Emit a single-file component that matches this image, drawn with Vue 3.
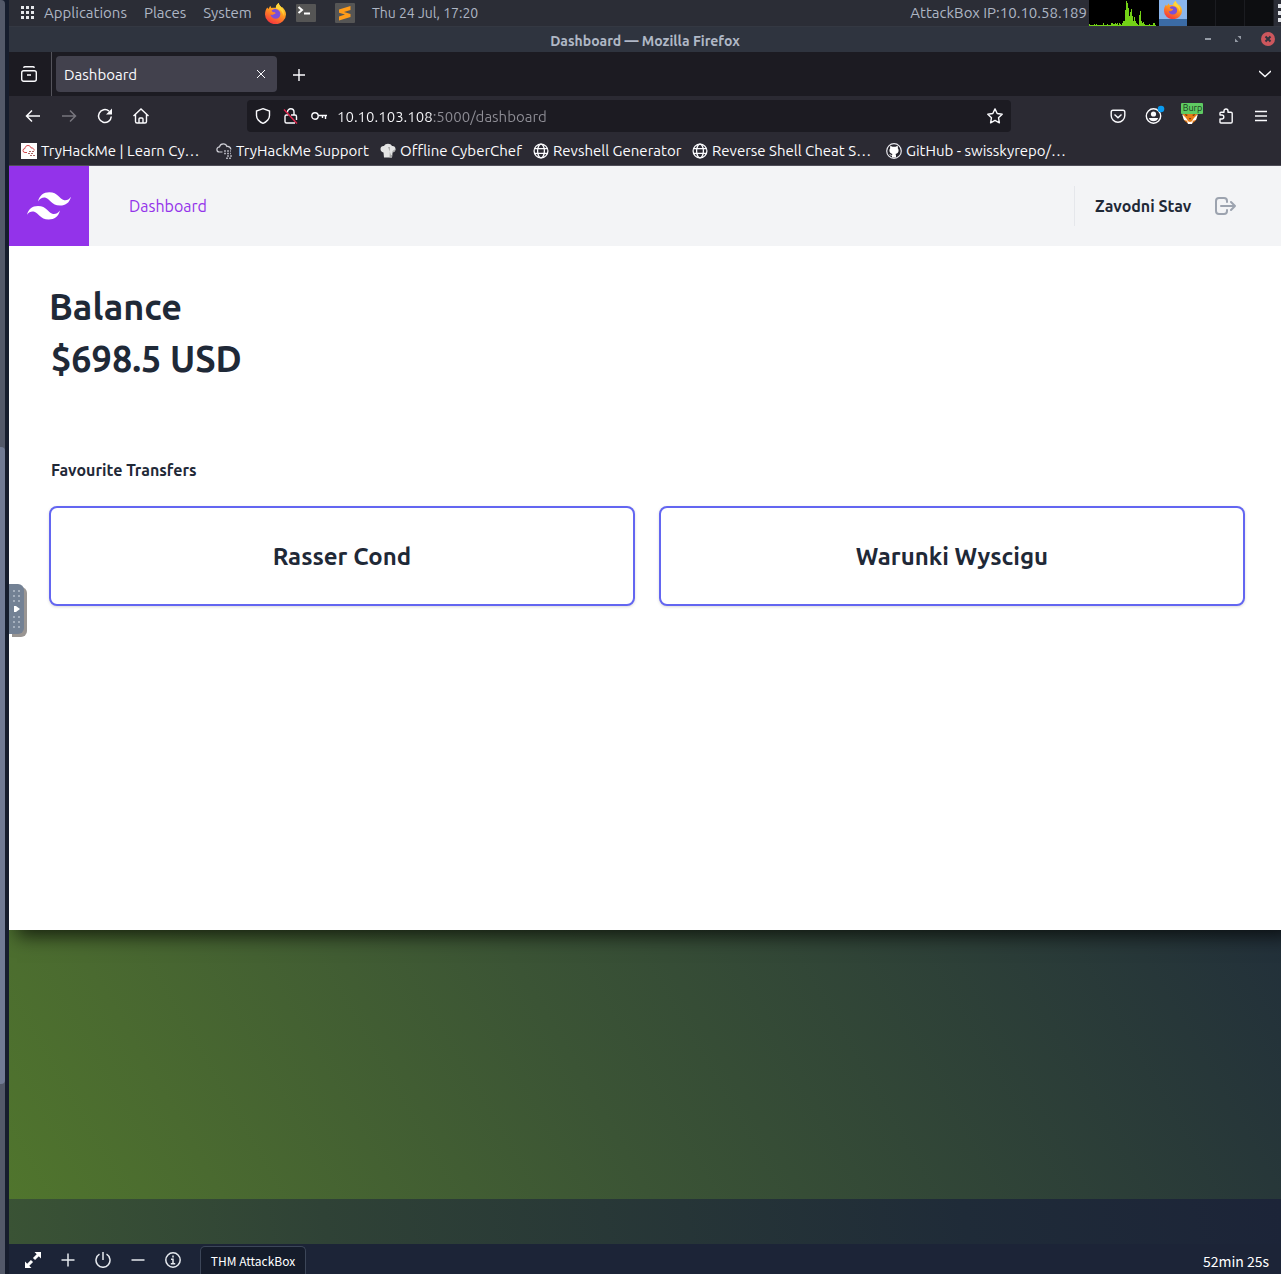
<script setup>
import { ref } from 'vue'

const address = ref('10.10.103.108:5000/dashboard')

const bookmarks = [
  { icon: 'thm', label: 'TryHackMe | Learn Cy…' },
  { icon: 'cloud', label: 'TryHackMe Support' },
  { icon: 'chef', label: 'Offline CyberChef' },
  { icon: 'globe', label: 'Revshell Generator' },
  { icon: 'globe', label: 'Reverse Shell Cheat S…' },
  { icon: 'github', label: 'GitHub - swisskyrepo/…' }
]

const transfers = ['Rasser Cond', 'Warunki Wyscigu']

const load = [
  2, 1, 1, 1, 1, 2, 1, 2, 1, 1, 1, 1, 1, 1, 3, 1, 1, 1, 2, 1, 1, 1, 3, 3, 2, 2, 3, 2, 3, 1, 3, 2, 1, 3,
  5, 5, 16, 25, 23, 18, 10, 14, 17, 10, 5, 9, 5, 3, 2, 1, 11, 15, 5, 3, 4, 2, 1, 1, 1, 1, 2, 1, 1, 1, 3, 3, 1
]
</script>

<template>
  <div class="screen">
    <svg class="sprite" aria-hidden="true">
      <defs>
        <linearGradient id="flame" x1="0.8" y1="0" x2="0.3" y2="1">
          <stop offset="0" stop-color="#ffe23c" />
          <stop offset="0.45" stop-color="#ff9a1f" />
          <stop offset="1" stop-color="#f5313f" />
        </linearGradient>
      </defs>
      <symbol id="firefox" viewBox="0 0 20 20">
        <path fill="url(#flame)" d="M2.2 4.2 3.3 5.6 5 2.5l1.1 2.3c1.5-.5 3-.4 4.2 0C10.200 2.600 11.500 1 13.200 0c0 2 1.600 3 2.700 4.400L16.600 4c2.200 2 3.400 4.300 3.400 7a9.800 9 0 0 1-20 0c0-2.500.6-5 2.200-6.800z" />
        <path fill="#7a4fd8" d="M6.200 7.300c1.500-1.600 4-2 6-.9 1.700 1 2.700 2.600 2.400 4.700-.4 2.500-2.400 4.100-4.900 3.900-2.300-.2-4.200-1.900-4.500-4 1 .5 2.200.5 3.300-.2l1.700-1-.8-1.100c-1 .2-2.300-.1-3.200-1.400z" />
        <path fill="#ffd53b" d="M13.200 0c0 2 1.600 3 2.700 4.400 1.900 2.400 2.500 5 1.500 7.900-.2-2.500-1.200-4.200-2.700-5.300C12.800 5.700 10.300 5 10.300 4.800 10.200 2.600 11.500 1 13.200 0z" />
      </symbol>
      <symbol id="i-thm" viewBox="0 0 16 16">
        <path fill="#fff" d="M0 0h16v16H0z" />
        <path fill="none" stroke="#d4474c" d="M6 9.500H4a2 2 0 0 1 0-4C4 3.500 5.500 2.500 7 2.500c1.600 0 2.700 1 3 2.400 1.700-.3 3.200 1 3.200 2.600" />
        <path stroke="#a66" stroke-dasharray="2 1" d="M8 8.500h5M7 10.500h6M9 12.500h5" />
      </symbol>
      <symbol id="i-cloud" viewBox="0 0 16 16">
        <path fill="none" stroke="#cfcfd6" stroke-width="1.200" d="M6.500 9H3.500a2.600 2.600 0 0 1 0-5.200C4 1.800 5.500.8 7.300.8c2 0 3.200 1.200 3.600 2.700 2-.2 3.700 1 4 3" />
        <path stroke="#a9a9b2" stroke-width="1.400" stroke-dasharray="2 1" d="M8 8h7M8 10.500h7M11 13h5M10 15.300h5" />
      </symbol>
      <symbol id="i-chef" viewBox="0 0 16 16">
        <path fill="#e4e4e4" d="M3.500 9.500C1.500 9 .5 7.700.5 6c0-2 1.600-3.300 3.500-3C4.800 1.600 6.200.8 8 .8s3.200.8 4 2.200c1.900-.3 3.500 1 3.500 3 0 1.700-1 3-3 3.500l-.5 5h-8z" />
        <path fill="#aaa" d="M8 4h2l-.5 10.500H12l.5-5c2-.5 3-1.800 3-3.500l-3 2-.5 4h-1z" />
      </symbol>
      <symbol id="i-globe" viewBox="0 0 16 16">
        <g fill="none" stroke="#fbfbfe" stroke-width="1.300">
          <circle cx="8" cy="8" r="6.900" />
          <ellipse cx="8" cy="8" rx="3.400" ry="6.900" />
          <path d="M1.500 5.700h13M1.500 10.300h13" />
        </g>
      </symbol>
      <symbol id="i-github" viewBox="0 0 16 16">
        <circle cx="8" cy="8" r="7.300" fill="#25242c" stroke="#e8e8ee" stroke-width="1.200" />
        <path fill="#fff" d="M6 14.600v-2c-1.500.3-2.200-.4-2.700-1.500 1 .2 1.300 1 2.700.8.100-.5.200-.8.500-1C4.500 10.500 3.400 9.500 3.400 7.300c0-.9.300-1.600.8-2.100-.2-.7-.2-1.500.1-2.200.9 0 1.600.4 2.200.8a8 8 0 0 1 3 0c.6-.4 1.300-.8 2.200-.8.300.7.300 1.500.1 2.200.5.500.8 1.200.8 2.100 0 2.200-1.100 3.200-3.100 3.600.4.300.5.900.5 1.500v2.200z" />
      </symbol>
    </svg>

    <div class="scroller"><div class="thumb"></div></div>

    <div class="remote">
      <div class="panel">
        <nav class="menus">
          <svg class="grid-icon" width="14" height="14" viewBox="0 0 14 14" fill="#e4e6ea">
            <path d="M0 0h3v3H0zM5 0h3v3H5zM10 0h3v3h-3zM0 5h3v3H0zM5 5h3v3H5zM10 5h3v3h-3zM0 10h3v3H0zM5 10h3v3H5zM10 10h3v3h-3z" />
          </svg>
          <button class="plain">Applications</button>
          <button class="plain">Places</button>
          <button class="plain">System</button>
        </nav>
        <div class="launchers">
          <button class="plain" aria-label="Firefox"><svg width="21" height="21"><use href="#firefox" /></svg></button>
          <button class="plain" aria-label="Terminal">
            <svg width="20" height="20" viewBox="0 0 20 20"><rect y="1" width="20" height="18" rx="1" fill="#555" /><path fill="none" stroke="#fff" stroke-width="2" d="M2.500 4 6 7 2.500 10M8 10.500h6" /></svg>
          </button>
          <button class="plain" aria-label="Sublime Text">
            <svg width="20" height="20" viewBox="0 0 20 20"><rect width="20" height="20" rx="1" fill="#555" /><path fill="#ff9c1a" d="M4 6.500 15.500 3v4L9 9l6.500 2v3L4 17.500v-4l6-2-6-1.800z" /></svg>
          </button>
        </div>
        <time class="clock">Thu 24 Jul, 17:20</time>
        <span class="ip">AttackBox IP:10.10.58.189</span>
        <svg class="load" width="70" height="27" viewBox="0 0 70 27">
          <rect v-for="(h, i) in load" :key="i" :x="i" :y="26 - h" width="1" :height="h" fill="#73d216" />
        </svg>
        <div class="desks">
          <div class="desk current"><svg width="18" height="18"><use href="#firefox" /></svg></div>
          <div class="desk"></div>
          <div class="desk"></div>
          <div class="desk"></div>
        </div>
        <div class="edge"><i></i><i></i><i></i></div>
      </div>

      <div class="titlebar">
        <span class="title">Dashboard — Mozilla Firefox</span>
        <div class="controls">
          <button class="plain" aria-label="Minimize"><svg width="14" height="14"><path stroke="#959ba5" stroke-width="2" d="M4 7h6" /></svg></button>
          <button class="plain" aria-label="Maximize"><svg width="14" height="14" fill="#959ba5"><path d="M6.500 4H10v3.500zM4 6.500 7.500 10H4z" /></svg></button>
          <button class="plain" aria-label="Close"><svg width="14" height="14"><circle cx="7" cy="7" r="7" fill="#cc575d" /><path stroke="#2f343f" stroke-width="2" d="m4.500 4.500 5 5m0-5-5 5" /></svg></button>
        </div>
      </div>

      <div class="tabs">
        <button class="plain view" aria-label="Firefox View">
          <svg width="16" height="16" viewBox="0 0 16 16" fill="none" stroke="#fbfbfe" stroke-width="1.400"><rect x=".7" y="4.700" width="14.600" height="10.600" rx="2" /><path d="M2.500 1.700Q3 .7 4 .7h8q1 0 1.500 1M6 9h4" /></svg>
        </button>
        <div class="tab">
          <span>Dashboard</span>
          <button class="plain" aria-label="Close tab"><svg width="10" height="10" stroke="#fbfbfe"><path d="m1 1 8 8m0-8-8 8" /></svg></button>
        </div>
        <button class="plain" aria-label="New tab"><svg width="12" height="14" stroke="#fbfbfe" stroke-width="1.400"><path d="M6 2v12M0 8h12" /></svg></button>
        <button class="plain all" aria-label="List all tabs"><svg width="12" height="8" fill="none" stroke="#fbfbfe" stroke-width="1.400"><path d="m0 1 6 5.500L12 1" /></svg></button>
      </div>

      <div class="toolbar">
        <div class="history">
          <button class="plain" aria-label="Back"><svg width="16" height="16" fill="none" stroke="#fbfbfe" stroke-width="1.500"><path d="M15 8H1.500M7 2.500 1.500 8 7 13.500" /></svg></button>
          <button class="plain" aria-label="Forward"><svg width="16" height="16" fill="none" stroke="#77767e" stroke-width="1.500"><path d="M1 8h13.500M9 2.500 14.500 8 9 13.500" /></svg></button>
          <button class="plain" aria-label="Reload"><svg width="16" height="16" fill="none" stroke="#fbfbfe" stroke-width="1.500"><path d="M14.300 8.500A6.400 6.400 0 1 1 12 3.100" /><path fill="#fbfbfe" stroke="none" d="M15 .5v6H9z" /></svg></button>
          <button class="plain" aria-label="Home"><svg width="16" height="16" fill="none" stroke="#fbfbfe" stroke-width="1.400"><path d="M.5 8 8 1l7.500 7M2.500 6.500v7q0 1.500 1.500 1.500h8q1.500 0 1.500-1.500v-7M6 15v-4q0-1 1-1h2q1 0 1 1v4" /></svg></button>
        </div>
        <form class="urlbar" @submit.prevent>
          <svg width="16" height="16" fill="none" stroke="#fbfbfe" stroke-width="1.400"><path d="M8 .7 14.500 3v4.500c0 3-2.500 6.500-6.500 7.800C4 14 1.500 10.500 1.500 7.500V3z" /></svg>
          <svg width="16" height="16" fill="none" stroke="#fbfbfe" stroke-width="1.400"><path d="M5.500 7H3.500Q2 7 2 8.500v5Q2 15 3.500 15h8.500M8 7h4q1.500 0 1.500 1.500V12M4.500 4.500V4a3.200 3.200 0 0 1 6.500 0v3" /><path stroke="#e22850" d="m1 1.500 13 14" /></svg>
          <svg width="16" height="16" fill="none" stroke="#fbfbfe" stroke-width="1.400"><circle cx="4" cy="8" r="3.200" /><path d="M7.200 7.500H16M14.500 8v3M11.500 8v2" /></svg>
          <input v-model="address" class="address" aria-label="Address" />
          <svg width="16" height="16" viewBox="0 0 16 16" fill="none" stroke="#fbfbfe" stroke-width="1.400" stroke-linejoin="round"><path d="m8 .9 2.200 4.600 5 .7-3.700 3.500.9 5.100L8 12.400l-4.400 2.400.9-5.100L.8 6.200l5-.7z" /></svg>
        </form>
        <div class="tools">
          <button class="plain" aria-label="Pocket"><svg width="16" height="16" fill="none" stroke="#fbfbfe" stroke-width="1.400"><path d="M3 2.200h10Q14.800 2.200 14.800 4v3.500a6.800 6.800 0 0 1-13.600 0V4Q1.200 2.200 3 2.200zM4.500 6.500 8 9.800l3.500-3.300" /></svg></button>
          <button class="plain badge" aria-label="Account"><svg width="22" height="22"><circle cx="10.500" cy="13" r="7.200" fill="none" stroke="#fbfbfe" stroke-width="1.400" /><circle cx="10.500" cy="11" r="2.600" fill="#fbfbfe" /><path fill="#fbfbfe" d="M5.800 15h9.400a5 5 0 0 1-9.400 0z" /><circle cx="18" cy="6" r="3.300" fill="#0a9bf0" /></svg></button>
          <button class="plain fox" aria-label="Burp proxy">
            <svg width="16" height="16" viewBox="0 0 16 16"><path fill="#e87c17" d="M1 0h14v8c0 4-3 7-7 8-4-1-7-4-7-8z" /><path fill="#fff" d="M0 6l4 4 2 3-4-1zM16 6l-4 4-2 3 4-1zM5 13l3 1 3-1-1 3H6z" /><path fill="#5b2c12" d="m3 6 3 1-2 1zM13 6l-3 1 2 1zM7 10h2l-1 2z" /></svg>
            <span class="tag">Burp</span>
          </button>
          <button class="plain" aria-label="Extensions"><svg width="16" height="16" fill="none" stroke="#fbfbfe" stroke-width="1.400" stroke-linejoin="round"><path d="M2 6V5q0-.8 1-.8h3V3a2 2 0 0 1 4 0v1.200h3q1.200 0 1.200 1.200v8.400q0 1.200-1.200 1.200H3q-1 0-1-1V11h1.800a2 2 0 0 0 0-4H2z" /></svg></button>
          <button class="plain" aria-label="Menu"><svg width="14" height="12" stroke="#fbfbfe" stroke-width="1.400"><path d="M1 1.500h12M1 6h12M1 10.500h12" /></svg></button>
        </div>
      </div>

      <nav class="bookmarks">
        <a v-for="b in bookmarks" :key="b.label" href="#" class="bookmark">
          <svg width="16" height="16"><use :href="'#i-' + b.icon" /></svg>
          <span>{{ b.label }}</span>
        </a>
      </nav>

      <div class="page">
        <header class="site-header">
          <a href="#" class="logo" aria-label="Home">
            <svg width="44" height="28" viewBox="0 0 44 28" fill="#fff">
              <path d="M11 9.500C12.500 3.500 16.500.3 22.300.3c8.800 0 9.900 6.600 14.300 7.700 2.900.7 5.400-.4 7.400-3.300-1.500 5.900-5.100 8.800-11 8.800-8.800 0-9.900-6.600-14.300-7.700C15.900 5.100 13 6.500 11 9.500zM0 22.800c1.500-5.900 5.100-8.800 11-8.800 8.800 0 9.900 6.600 14.300 7.700 2.900.7 5.400-.4 7.700-3.300-1.500 5.900-5.500 9-11.300 9C13 27.400 11.700 20.800 7.300 19.700 4.400 19 2 20 0 22.800z" />
            </svg>
          </a>
          <a href="#" class="site-link">Dashboard</a>
          <div class="user">
            <strong>Zavodni Stav</strong>
            <button class="plain" aria-label="Log out">
              <svg width="21" height="20" fill="none" stroke="#9ca3af" stroke-width="2" stroke-linecap="round" stroke-linejoin="round"><path d="M12 6V5q0-3-3-3H4Q1 2 1 5v10q0 3 3 3h5q3 0 3-3v-1M6 10h14M16 6l4 4-4 4" /></svg>
            </button>
          </div>
        </header>
        <main class="content">
          <h1>Balance</h1>
          <p class="amount">$698.5 USD</p>
          <h2>Favourite Transfers</h2>
          <div class="cards">
            <button v-for="t in transfers" :key="t" class="card">{{ t }}</button>
          </div>
        </main>
      </div>

      <div class="wallpaper"></div>
      <div class="strip"></div>

      <button class="handle" aria-label="Show panel">
        <svg width="15" height="50" fill="#a5afbd">
          <path d="M4 6h2v2H4zm5 0h2v2H9zM4 11h2v2H4zm5 0h2v2H9zM4 16h2v2H4zm5 0h2v2H9zM4 32h2v2H4zm5 0h2v2H9zM4 37h2v2H4zm5 0h2v2H9zM4 42h2v2H4zm5 0h2v2H9z" />
          <path fill="#fff" d="M5 22h2l4 3-4 3H5z" />
        </svg>
      </button>

      <footer class="bar">
        <div class="bar-icons">
          <button class="plain" aria-label="Full screen"><svg width="16" height="16" fill="#fff" stroke="#fff"><path stroke="none" d="M9.500 0H16v6.500zM0 9.500 6.500 16H0z" /><path stroke-width="3" d="m9 7 5-5M2 14l5-5" /></svg></button>
          <button class="plain" aria-label="Add time"><svg width="16" height="16" stroke="#e5e9ee" stroke-width="1.500"><path d="M8 1.500v13M1.500 8h13" /></svg></button>
          <button class="plain" aria-label="Power"><svg width="16" height="16" fill="none" stroke="#e5e9ee" stroke-width="1.500"><path d="M8 0v8M4.500 2.200a7 7 0 1 0 7 0" /></svg></button>
          <button class="plain" aria-label="Minimize"><svg width="16" height="16" stroke="#e5e9ee" stroke-width="1.500"><path d="M1.500 8h13" /></svg></button>
          <button class="plain" aria-label="Information"><svg width="16" height="16" fill="none" stroke="#e5e9ee" stroke-width="1.500"><circle cx="8" cy="8" r="7.200" /><path d="M8 3.500v2M6 7.200h2v4.300M5.800 11.700h4.400" /></svg></button>
        </div>
        <button class="machine">THM AttackBox</button>
        <span class="remaining">52min 25s</span>
      </footer>
    </div>
  </div>
</template>

<style>
body {
  margin: 0;
}
</style>

<style scoped>
* {
  box-sizing: border-box;
}

.screen {
  display: flex;
  min-height: 100vh;
  background: #161d2d;
  font: 15px/20px Ubuntu, "Noto Sans", sans-serif;
}

svg {
  display: block;
  flex: none;
}

.sprite {
  position: absolute;
  width: 0;
  height: 0;
}

a {
  color: inherit;
  text-decoration: none;
}

.plain {
  display: flex;
  padding: 0;
  border: 0;
  background: none;
  color: inherit;
  font: inherit;
  white-space: nowrap;
}

.scroller {
  display: grid;
  grid-template-rows: 447fr 637fr 190fr;
  width: 5px;
  margin-right: 4px;
  border-radius: 0 4px 0 0;
  background: #535969;
}

.thumb {
  grid-row: 2;
  border-radius: 0 4px 4px 0;
  background: #717b94;
}

.remote {
  position: relative;
  display: flex;
  flex: 1;
  flex-direction: column;
  min-width: 0;
}

.panel {
  display: flex;
  align-items: center;
  height: 27px;
  overflow: hidden;
  border-bottom: 1px solid #343842;
  background: #2b2d36;
  color: #aeb6c4;
  white-space: nowrap;
}

.menus {
  display: flex;
  align-items: center;
  gap: 17px;
  width: 256px;
  padding-left: 12px;
}

.grid-icon {
  margin-right: -8px;
}

.launchers {
  display: grid;
  grid-template-columns: 31px 39px 37px;
  align-items: center;
}

.clock {
  font-size: 14px;
}

.ip {
  margin-left: auto;
}

.load {
  margin-left: 2px;
  background: #000;
}

.desks {
  display: flex;
  align-self: stretch;
}

.desk {
  width: 29px;
  border-right: 1px solid #1b1c21;
  background: #0d0e11;
}

.desk.current {
  display: flex;
  justify-content: center;
  width: 28px;
  padding-top: 1px;
  border-right: 0;
  border-bottom: 7px solid #3b6ba5;
  background: #8ab5ec;
}

.edge {
  display: grid;
  gap: 3px;
  width: 7px;
  padding-left: 4px;
}

.edge i {
  height: 4px;
  background: #dfe1e6;
}

.titlebar {
  display: grid;
  grid-template-columns: 1fr auto 1fr;
  align-items: center;
  height: 25px;
  background: #2f343f;
  color: #b0b8c6;
  font-size: 14px;
  font-weight: 700;
}

.title {
  grid-column: 2;
  padding-top: 2px;
}

.controls {
  display: flex;
  gap: 16px;
  justify-content: flex-end;
  padding: 0 6px 2px 0;
}

.tabs {
  display: flex;
  align-items: center;
  height: 44px;
  background: #1c1b22;
  color: #fbfbfe;
}

.view {
  align-items: center;
  justify-content: center;
  width: 43px;
  height: 44px;
  margin-right: 4px;
  padding-right: 3px;
  border-right: 1px solid #55545c;
}

.tab {
  display: flex;
  align-items: center;
  justify-content: space-between;
  width: 221px;
  height: 36px;
  margin-right: 16px;
  padding: 0 11px 0 8px;
  border-radius: 4px;
  background: #42414d;
}

.tab span {
  padding-top: 2px;
}

.all {
  margin: 0 10px 0 auto;
}

.toolbar {
  display: flex;
  align-items: center;
  height: 40px;
  background: #2b2a33;
}

.history {
  display: flex;
  gap: 20px;
  width: 238px;
  padding-left: 16px;
}

.urlbar {
  display: flex;
  flex: 1;
  align-items: center;
  gap: 12px;
  height: 32px;
  padding: 0 8px;
  border-radius: 4px;
  background: #1c1b22;
}

.address {
  flex: 1;
  min-width: 0;
  margin-left: -2px;
  padding: 2px 0 0;
  border: 0;
  outline: 0;
  background: linear-gradient(90deg, #fbfbfe 95px, #8f8e96 95px);
  -webkit-background-clip: text;
  background-clip: text;
  color: #8f8e96;
  -webkit-text-fill-color: transparent;
  font: inherit;
}

.tools {
  display: flex;
  align-items: center;
  justify-content: flex-end;
  gap: 20px;
  width: 270px;
  padding-right: 13px;
}

.badge {
  margin: -4px -3px 0;
}

.fox {
  position: relative;
}

.tag {
  position: absolute;
  top: -5px;
  left: -1px;
  width: 22px;
  height: 11px;
  padding-left: 1px;
  border-radius: 1px;
  background: #5fcb62;
  color: #1b3a1c;
  font-size: 9px;
  line-height: 11px;
}

.bookmarks {
  display: grid;
  grid-template-columns: 195px 164px 153px 159px 194px 1fr;
  align-items: center;
  height: 30px;
  padding-left: 12px;
  border-bottom: 1px solid #4f4e58;
  background: #2b2a33;
  color: #fbfbfe;
}

.bookmark {
  display: flex;
  align-items: center;
  gap: 4px;
  white-space: nowrap;
}

.page {
  z-index: 1;
  display: flex;
  flex: 1;
  flex-direction: column;
  background: #fff;
  box-shadow: 10px 4px 18px 2px rgba(0, 0, 0, 0.7);
  clip-path: inset(0 0 -40px 0);
  color: #1f2937;
}

.site-header {
  display: flex;
  align-items: center;
  height: 80px;
  background: #f3f4f6;
  font-size: 16px;
  line-height: 24px;
}

.logo {
  display: flex;
  align-items: center;
  justify-content: center;
  width: 80px;
  height: 80px;
  margin-right: 40px;
  background: #9333ea;
}

.site-link {
  color: #9333ea;
}

.user {
  display: flex;
  align-items: center;
  justify-content: space-between;
  width: 162px;
  height: 40px;
  margin: 0 45px 0 auto;
  padding-left: 20px;
  border-left: 1px solid #e5e7eb;
}

.content {
  padding: 35px 36px 36px 40px;
}

h1,
h2,
p {
  margin: 0;
  font-weight: 700;
}

h1,
.amount {
  font-size: 36px;
  line-height: 52px;
}

.amount,
h2 {
  padding-left: 2px;
}

h2 {
  margin: 73px 0 24px;
  font-size: 16px;
  line-height: 24px;
}

.cards {
  display: grid;
  grid-template-columns: 1fr 1fr;
  gap: 24px;
}

.card {
  height: 100px;
  padding-top: 2px;
  border: 2px solid #6366f1;
  border-radius: 8px;
  background: #fff;
  box-shadow: 0 1px 3px rgba(0, 0, 0, 0.15);
  color: inherit;
  font: 700 24px/32px Ubuntu, "Noto Sans", sans-serif;
}

.wallpaper {
  height: 269px;
  background: linear-gradient(60deg, #50752d 0%, #4a6a30 15%, #3b5435 45%, #22303a 100%);
}

.strip {
  height: 45px;
  background: linear-gradient(80deg, #3a5335 0%, #2f4236 25%, #1f2b38 75%, #1c2438 100%);
}

.handle {
  position: absolute;
  top: 584px;
  left: 0;
  z-index: 2;
  padding: 0;
  border: 0;
  border-radius: 0 6px 6px 0;
  background: #738194;
  box-shadow: 3px 3px 0 #999592;
}

.bar {
  display: flex;
  align-items: center;
  height: 30px;
  padding: 2px 12px 0 16px;
  background: #1c2437;
  color: #fff;
  font: 14px/20px "Noto Sans CJK JP", sans-serif;
}

.bar-icons {
  display: flex;
  gap: 19px;
  margin-right: 19px;
}

.machine {
  align-self: stretch;
  width: 106px;
  padding: 0;
  border: 1px solid #3c4658;
  border-bottom: 0;
  border-radius: 5px 5px 0 0;
  background: #151c2b;
  color: inherit;
  font: 12px/18px "Noto Sans CJK JP", sans-serif;
  white-space: nowrap;
}

.remaining {
  margin-left: auto;
  padding-top: 2px;
}
</style>
